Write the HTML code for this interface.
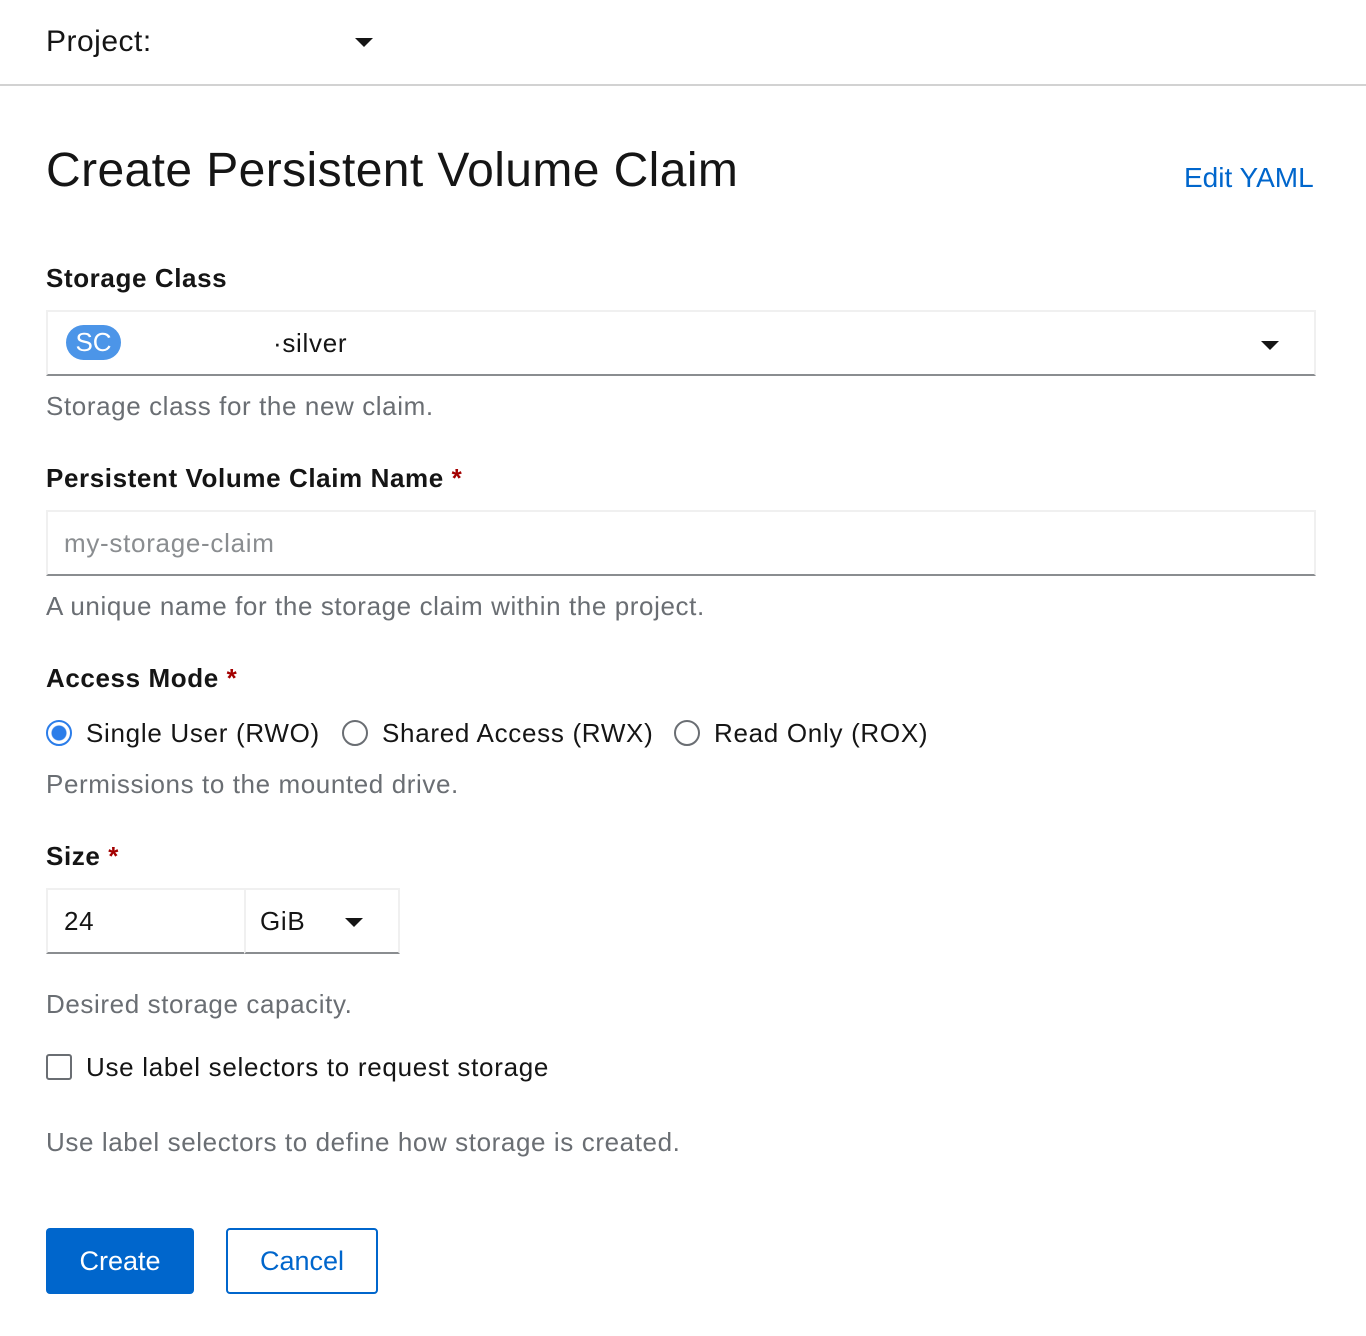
<!DOCTYPE html>
<html><head><style>
*{margin:0;padding:0;box-sizing:border-box}
body{width:1366px;height:1336px;background:#fff;font-family:"Liberation Sans",sans-serif;color:#151515;position:relative;overflow:hidden}
.a{position:absolute;white-space:nowrap}
.lbl{font-size:26px;font-weight:bold;line-height:30px;letter-spacing:0.6px}
.help{font-size:26px;color:#6a6e73;line-height:30px;letter-spacing:0.6px}
.req{color:#a30000}
.t{font-size:26px;line-height:32px;letter-spacing:0.7px}
.inp{position:absolute;border:2px solid #f0f0f0;border-bottom:2px solid #8a8d90;background:#fff}
.caret{position:absolute;width:0;height:0;border-left:9px solid transparent;border-right:9px solid transparent;border-top:9px solid #151515}
.radio{position:absolute;width:26px;height:26px;border-radius:50%;border:2px solid #6a6e73}
</style></head><body>
<div class="a" style="left:46px;top:24px;font-size:30px;line-height:36px;letter-spacing:0.5px">Project:</div>
<div class="caret" style="left:355px;top:38px"></div>
<div class="a" style="left:0;top:84px;width:1366px;height:2px;background:#d2d2d2"></div>
<div class="a" style="left:46px;top:143px;font-size:48px;line-height:56px;letter-spacing:0.4px">Create Persistent Volume Claim</div>
<div class="a" style="left:1184px;top:160px;font-size:28px;line-height:36px;color:#0066cc">Edit YAML</div>

<div class="a lbl" style="left:46px;top:263px">Storage Class</div>
<div class="inp" style="left:46px;top:310px;width:1270px;height:66px"></div>
<div class="a" style="left:66px;top:325px;width:55px;height:35px;border-radius:18px;background:#4c95e8;color:#fff;font-size:26px;line-height:35px;text-align:center">SC</div>
<div class="a t" style="left:273px;top:327px">·silver</div>
<div class="caret" style="left:1261px;top:341px"></div>
<div class="a help" style="left:46px;top:391px">Storage class for the new claim.</div>

<div class="a lbl" style="left:46px;top:463px">Persistent Volume Claim Name <span class="req">*</span></div>
<div class="inp" style="left:46px;top:510px;width:1270px;height:66px"></div>
<div class="a t" style="left:64px;top:527px;color:#8a8d90">my-storage-claim</div>
<div class="a help" style="left:46px;top:591px">A unique name for the storage claim within the project.</div>

<div class="a lbl" style="left:46px;top:663px">Access Mode <span class="req">*</span></div>
<div class="radio" style="left:46px;top:720px;border-color:#2b7de9;background:radial-gradient(circle,#2b7de9 0 7px,#fff 8px)"></div>
<div class="a t" style="left:86px;top:717px">Single User (RWO)</div>
<div class="radio" style="left:342px;top:720px"></div>
<div class="a t" style="left:382px;top:717px">Shared Access (RWX)</div>
<div class="radio" style="left:674px;top:720px"></div>
<div class="a t" style="left:714px;top:717px">Read Only (ROX)</div>
<div class="a help" style="left:46px;top:769px">Permissions to the mounted drive.</div>

<div class="a lbl" style="left:46px;top:841px">Size <span class="req">*</span></div>
<div class="inp" style="left:46px;top:888px;width:200px;height:66px"></div>
<div class="inp" style="left:244px;top:888px;width:156px;height:66px"></div>
<div class="a t" style="left:64px;top:905px">24</div>
<div class="a t" style="left:260px;top:905px">GiB</div>
<div class="caret" style="left:345px;top:918px"></div>
<div class="a help" style="left:46px;top:989px">Desired storage capacity.</div>

<div class="a" style="left:46px;top:1054px;width:26px;height:26px;border:2px solid #6a6e73;border-radius:3px"></div>
<div class="a t" style="left:86px;top:1051px">Use label selectors to request storage</div>
<div class="a help" style="left:46px;top:1127px">Use label selectors to define how storage is created.</div>

<div class="a" style="left:46px;top:1228px;width:148px;height:66px;background:#0066cc;border-radius:4px;color:#fff;font-size:27px;line-height:66px;text-align:center">Create</div>
<div class="a" style="left:226px;top:1228px;width:152px;height:66px;border:2px solid #0066cc;border-radius:4px;color:#0066cc;font-size:27px;line-height:62px;text-align:center">Cancel</div>
</body></html>
